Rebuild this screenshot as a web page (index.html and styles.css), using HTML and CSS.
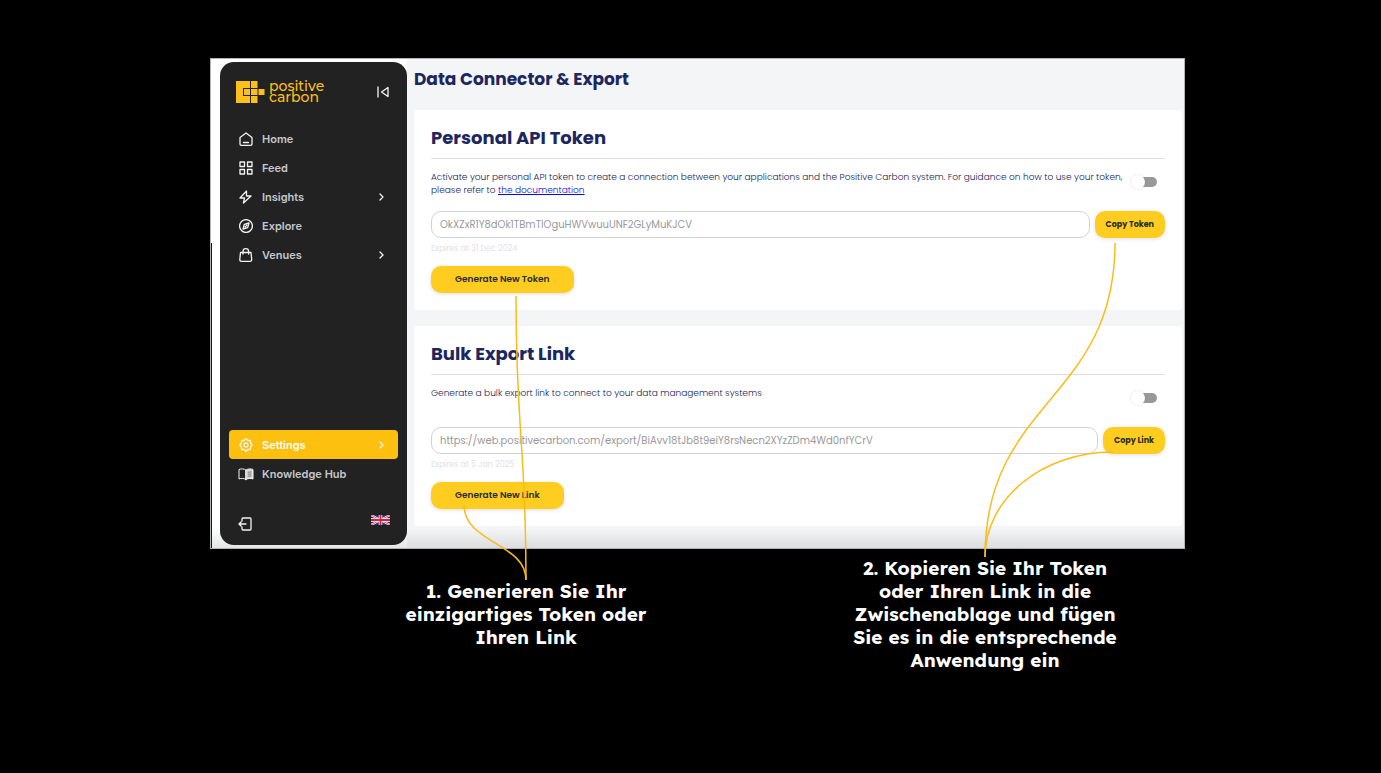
FILE: index.html
```html
<!DOCTYPE html>
<html lang="de">
<head>
<meta charset="utf-8">
<title>Data Connector &amp; Export</title>
<link rel="stylesheet" href="styles.css">
</head>
<body>
<div class="stage">
  <div class="window">
    <aside class="sidebar">
      <div class="brand">
        <svg class="brand-mark" viewBox="0 0 29 22" aria-hidden="true">
          <path d="M0 0H14V7H7V15H14V22H0Z"/>
          <path d="M15 0h6.500v7H15zM8 8h6v6H8zM15 8h6.500v6H15zM15 15h6.500v7H15zM22.500 8h6v6h-6z"/>
        </svg>
        <span class="brand-name">positive<br>carbon</span>
        <button class="collapse" aria-label="Collapse menu">
          <svg viewBox="0 0 12 12"><path d="M1 1v10M11 1.500v9L4.500 6z"/></svg>
        </button>
      </div>
      <nav class="nav">
        <a class="item" href="#"><svg class="icon" viewBox="0 0 14 14"><path d="M1 5.500 7 1l6 4.500V12a1.300 1.300 0 0 1-1.300 1.300H2.300A1.300 1.300 0 0 1 1 12zM4.500 10.500h5"/></svg><span>Home</span></a>
        <a class="item" href="#"><svg class="icon" viewBox="0 0 14 14"><path d="M1 1h4.500v4.500H1zM8.500 1H13v4.500H8.500zM1 8.500h4.500V13H1zM8.500 8.500H13V13H8.500z"/></svg><span>Feed</span></a>
        <a class="item" href="#"><svg class="icon" viewBox="0 0 14 14"><path d="M7.500 1 1 8h4.500l-1 5L12 6H7.500z"/></svg><span>Insights</span><svg class="chevron" viewBox="0 0 6 8"><path d="m1 1 3 3-3 3"/></svg></a>
        <a class="item" href="#"><svg class="icon" viewBox="0 0 14 14"><circle cx="7" cy="7" r="6.400"/><path d="m10 4-1.300 4.700L4 10l1.300-4.700zM6.200 7.800l1.600-1.600"/></svg><span>Explore</span></a>
        <a class="item" href="#"><svg class="icon" viewBox="0 0 14 14"><path d="M1.500 4.500h10.500l.7 7a1.600 1.600 0 0 1-1.600 1.800H2.400A1.600 1.600 0 0 1 .8 11.500zM4 6V3.500a2.800 2.800 0 0 1 5.600 0V6"/></svg><span>Venues</span><svg class="chevron" viewBox="0 0 6 8"><path d="m1 1 3 3-3 3"/></svg></a>
      </nav>
      <nav class="nav nav-end">
        <a class="item active" href="#"><svg class="icon" viewBox="0 0 14 14"><path d="M7 .8 8.800 2.500l2.500-.1.200 2.500L13.200 7l-1.700 2.100-.2 2.500-2.500-.1L7 13.200l-1.800-1.700-2.500.1-.2-2.500L.8 7l1.700-2.100.2-2.500 2.500.1z"/><circle cx="7" cy="7" r="2"/></svg><span>Settings</span><svg class="chevron" viewBox="0 0 6 8"><path d="m1 1 3 3-3 3"/></svg></a>
        <a class="item" href="#"><svg class="icon icon-book" viewBox="0 0 16 14"><path d="M8 3C6 1.600 3 1.600 1 2.500v9.500c2-.9 5-.9 7 .5z"/><path class="filled" d="M8 3c2-1.400 5-1.400 7-.5V12c-2-.9-5-.9-7 .5z"/><path class="page-mark" d="M10 5.200 13 5M10 7.200 13 7M10 9.200 13 9"/></svg><span>Knowledge Hub</span></a>
      </nav>
      <div class="side-foot">
        <button class="logout" aria-label="Log out"><svg class="icon" viewBox="0 0 14 14"><path d="M4 4V2a1 1 0 0 1 1-1h7a1 1 0 0 1 1 1v10a1 1 0 0 1-1 1H5a1 1 0 0 1-1-1v-2M8 7H1M3 5 1 7l2 2"/></svg></button>
        <button class="language" aria-label="English"><svg viewBox="0 0 19 10"><path fill="#1f2f7c" d="M0 0h19v10H0z"/><path stroke="#fff" stroke-width="2" d="m0 0 19 10M19 0 0 10"/><path stroke="#d8203a" stroke-width=".8" d="m0 0 19 10M19 0 0 10"/><path stroke="#fff" stroke-width="3.500" d="M9.500 0v10M0 5h19"/><path stroke="#d8203a" stroke-width="2" d="M9.500 0v10M0 5h19"/></svg></button>
      </div>
    </aside>
    <main class="main">
      <h1 class="title">Data Connector &amp; Export</h1>
      <section class="card">
        <h2 class="card-title">Personal API Token</h2>
        <div class="info">
          <p class="desc">Activate your personal API token to create a connection between your applications and the Positive Carbon system. For guidance on how to use your token, please refer to <a href="#">the documentation</a></p>
          <input class="toggle" type="checkbox" aria-label="Enable personal API token">
        </div>
        <div class="copy-row">
          <input class="field" type="text" aria-label="Personal API token" value="OkXZxR1Y8dOk1TBmTIOguHWVwuuUNF2GLyMuKJCV">
          <button class="btn">Copy Token</button>
        </div>
        <p class="expires">Expires at 31 Dec 2024</p>
        <button class="btn btn-wide">Generate New Token</button>
      </section>
      <section class="card">
        <h2 class="card-title">Bulk Export Link</h2>
        <div class="info">
          <p class="desc">Generate a bulk export link to connect to your data management systems</p>
          <input class="toggle" type="checkbox" aria-label="Enable bulk export link">
        </div>
        <div class="copy-row">
          <input class="field" type="text" aria-label="Bulk export link" value="https://web.positivecarbon.com/export/BiAvv18tJb8t9eiY8rsNecn2XYzZDm4Wd0nfYCrV">
          <button class="btn">Copy Link</button>
        </div>
        <p class="expires">Expires at 5 Jan 2025</p>
        <button class="btn btn-wide">Generate New Link</button>
      </section>
    </main>
  </div>
  <div class="captions">
    <p class="caption caption-low">1. Generieren Sie Ihr<br>einzigartiges Token oder<br>Ihren Link</p>
    <p class="caption">2. Kopieren Sie Ihr Token<br>oder Ihren Link in die<br>Zwischenablage und fügen<br>Sie es in die entsprechende<br>Anwendung ein</p>
  </div>
  <svg class="connectors" viewBox="0 0 975 616" preserveAspectRatio="none" aria-hidden="true">
    <path d="M306 238C306 380 316 380 316 522"/>
    <path d="M254 447C254 485 316 485 316 522"/>
    <path d="M905 185C905 342 775 342 775 499"/>
    <path d="M903 394C832 394 775 441 775 499"/>
  </svg>
</div>
</body>
</html>
```
FILE: styles.css
```css
* { box-sizing: border-box; }

body {
  margin: 0;
  background: #000;
  font-family: Poppins, Inter, sans-serif;
  color: #1d275f;
}

h1, h2, p { margin: 0; }

button {
  font-family: inherit;
  border: 0;
  padding: 0;
  background: none;
  cursor: pointer;
}

.stage {
  position: relative;
  margin: 58px 196px 0 210px;
}

.window {
  position: relative;
  display: flex;
  border: 1px solid #b4b4b4;
  background: linear-gradient(#fff 96%, #e4e5e6);
}

.window::before {
  content: "";
  position: absolute;
  left: 0;
  top: 184px;
  bottom: 0;
  width: 1px;
  background: #1c1512;
}

.sidebar {
  display: flex;
  flex-direction: column;
  flex: 0 0 187px;
  margin: 3px 0 3px 9px;
  padding: 18px 9px 14px;
  border-radius: 14px;
  background: #222;
  font-family: Inter, sans-serif;
}

.brand {
  display: flex;
  align-items: center;
  gap: 4px;
  height: 24px;
  padding: 0 9px 0 7px;
  margin-bottom: 20px;
}

.brand-mark { width: 29px; height: 22px; fill: #fdbf1c; }

.brand-name {
  font-family: Montserrat, Inter, sans-serif;
  font-size: 14px;
  font-weight: 500;
  line-height: 11px;
  color: #fdbf1c;
}

.collapse { margin-left: auto; height: 12px; }
.collapse svg { display: block; width: 12px; height: 12px; }

.collapse path, .icon, .chevron {
  fill: none;
  stroke: #f4f4f4;
  stroke-width: 1.3;
  stroke-linejoin: round;
  stroke-linecap: round;
}

.item {
  display: flex;
  align-items: center;
  height: 29px;
  padding: 0 13px 0 10px;
  gap: 9px;
  border-radius: 4px;
  color: #c5c7cd;
  font-size: 11px;
  font-weight: 600;
  text-decoration: none;
}

.icon { width: 14px; height: 14px; display: block; }
.icon-book { width: 16px; margin: 0 -1px; stroke-width: 1; }
.filled { fill: #d8d8d8; }
.page-mark { stroke: #777; }
.chevron { width: 6px; height: 8px; margin-left: auto; }
.nav-end { margin-top: auto; }

.active { background: #fdc00f; color: #fff; }

.side-foot {
  display: flex;
  justify-content: space-between;
  align-items: flex-start;
  margin-top: 27px;
  padding: 0 8px 0 9px;
}

.logout { margin-top: 2px; }
.language svg { display: block; width: 19px; height: 10px; }

.main {
  flex: 1;
  min-width: 0;
  padding: 7px 2px 22px 7px;
  background: linear-gradient(#f4f5f7 96%, #dcdddf);
}

.title {
  font-size: 17px;
  font-weight: 700;
  line-height: 26px;
  margin-bottom: 18px;
}

.card {
  padding: 17px;
  border-radius: 4px;
  background: #fff;
}

.card + .card { margin-top: 16px; }

.card-title {
  padding-bottom: 10px;
  border-bottom: 1px solid #dedee0;
  font-size: 18px;
  font-weight: 700;
  line-height: 21px;
}

.info {
  display: flex;
  justify-content: space-between;
  align-items: flex-start;
  min-height: 26px;
  margin: 12px 0 14px;
}

.desc {
  max-width: 694px;
  font-size: 9px;
  font-weight: 300;
  line-height: 13px;
  color: #141c55;
}

.desc a { color: #0a0ae6; }

.toggle {
  appearance: none;
  display: flex;
  flex: none;
  align-items: center;
  width: 26px;
  height: 10px;
  margin: 6px 8px 0 0;
  border-radius: 5px;
  background: linear-gradient(90deg, #fff 40%, #999 40%);
}

.toggle::before {
  content: "";
  width: 14px;
  height: 14px;
  flex: none;
  border-radius: 50%;
  background: #fff;
  box-shadow: 0 0 3px #0002;
}

.copy-row { display: flex; gap: 5px; }

.field {
  flex: 1;
  min-width: 0;
  height: 27px;
  padding: 0 8px;
  border: 1px solid #d2d2d2;
  border-radius: 10px;
  background: #fff;
  color: #999;
  font: 10px Poppins, Inter, sans-serif;
}

.btn {
  display: block;
  height: 27px;
  padding: 0 11px;
  border-radius: 10px;
  background: #ffcd20;
  box-shadow: 0 1px 4px #0002;
  color: #292c32;
  font-size: 8px;
  font-weight: 700;
}

.btn-wide {
  padding: 0 24px;
  font-size: 9px;
  font-weight: 600;
}

.expires {
  margin: 6px 0 12px;
  font-size: 8px;
  line-height: 10px;
  color: #dfe0e9;
}

.captions {
  display: flex;
  justify-content: space-between;
  align-items: flex-start;
  padding: 8px 55px 0 186px;
}

.caption {
  width: 290px;
  color: #fff;
  font: 700 19px/23px Lexend, "Noto Sans", sans-serif;
  text-align: center;
}

.caption-low { width: 260px; margin-top: 23px; }

.connectors {
  position: absolute;
  left: 0;
  top: 0;
  width: 100%;
  height: 616px;
  fill: none;
  stroke: #fbbc18;
  stroke-width: 1.5;
  pointer-events: none;
}
```
